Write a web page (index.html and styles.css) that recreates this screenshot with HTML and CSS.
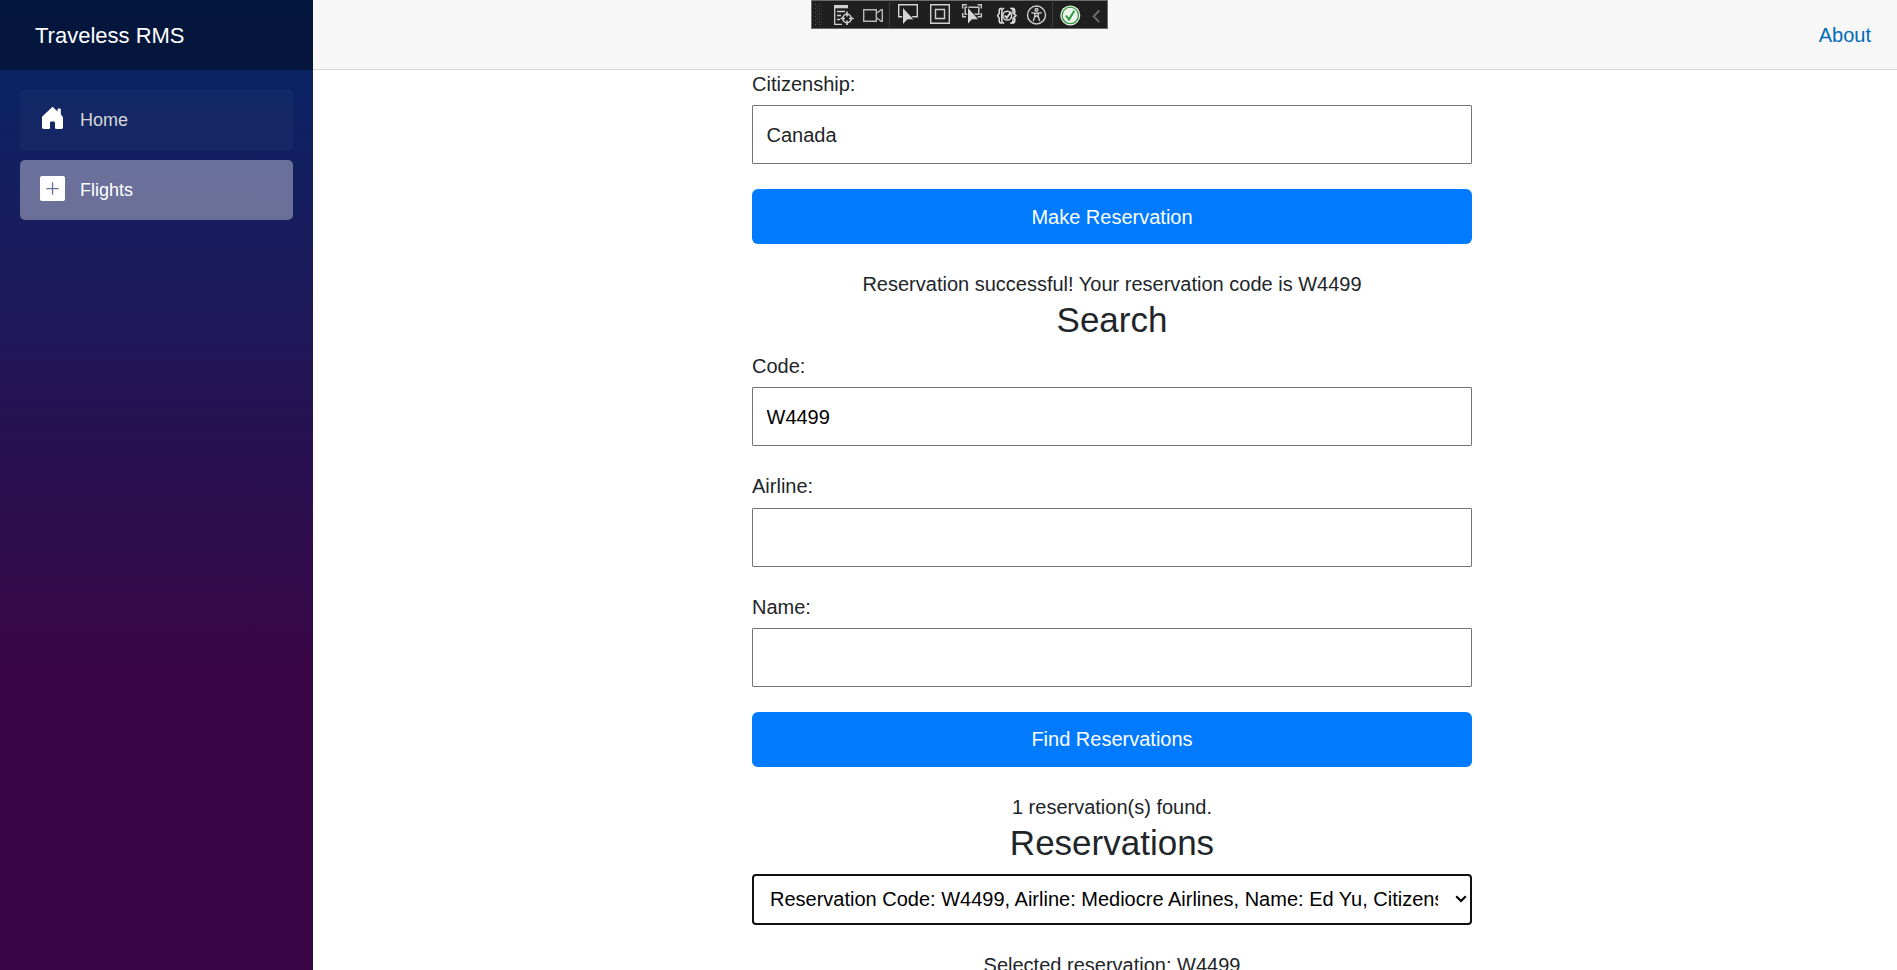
FILE: index.html
```html
<!DOCTYPE html>
<html lang="en">
<head>
<meta charset="utf-8">
<title>Traveless RMS</title>
<link rel="stylesheet" href="styles.css">
</head>
<body>
<div class="page">
  <aside class="sidebar">
    <div class="brand-row"><a class="brand">Traveless RMS</a></div>
    <nav class="nav">
      <a class="nav-link">
        <svg class="nav-icon" viewBox="0 0 25 25"><path fill="#fff" d="M12.5 .7 L17.6 5.4 V3.1 Q17.6 2.4 18.4 2.4 H20 Q20.8 2.4 20.8 3.2 V8.3 L23 11.2 V21.6 Q23 23 21.6 23 H16.2 Q15 23 15 21.8 V16.8 Q15 15.4 13.7 15.4 H11.4 Q10 15.4 10 16.8 V21.8 Q10 23 8.8 23 H3.6 Q2 23 2 21.6 V10.8 Z"/></svg>
        <span>Home</span>
      </a>
      <a class="nav-link active">
        <svg class="nav-icon" viewBox="0 0 25 25"><path fill="#fff" fill-rule="evenodd" d="M2 0H23Q25 0 25 2V23Q25 25 23 25H2Q0 25 0 23V2Q0 0 2 0ZM11.9 6.3V11.9H6.3V13.2H11.9V18.8H13.2V13.2H18.8V11.9H13.2V6.3Z"/></svg>
        <span>Flights</span>
      </a>
    </nav>
  </aside>
  <main class="main">
    <header class="top-row"><a class="about">About</a></header>
    <article class="content">
      <label class="label" for="citizenship">Citizenship:</label>
      <input class="input input-muted" id="citizenship" value="Canada">
      <button class="button">Make Reservation</button>
      <p class="message">Reservation successful! Your reservation code is W4499</p>
      <h3 class="heading">Search</h3>
      <label class="label" for="code">Code:</label>
      <input class="input" id="code" value="W4499">
      <label class="label" for="airline">Airline:</label>
      <input class="input" id="airline">
      <label class="label" for="name">Name:</label>
      <input class="input" id="name">
      <button class="button">Find Reservations</button>
      <p class="message">1 reservation(s) found.</p>
      <h3 class="heading">Reservations</h3>
      <div class="select-box">
        <select class="select">
          <option>Reservation Code: W4499, Airline: Mediocre Airlines, Name: Ed Yu, Citizenship: Canada</option>
        </select>
        <svg class="chevron" viewBox="0 0 12 8"><path d="M1.2 1.2 L6 6 L10.8 1.2" fill="none" stroke="#000" stroke-width="2.1"/></svg>
      </div>
      <p class="message">Selected reservation: W4499</p>
    </article>
  </main>
</div>
<div class="debug-bar">
  <svg class="grip" viewBox="0 0 8 23"><g fill="#505050"><path d="M0 1h1v1h-1zM4 1h1v1h-1zM2 3h1v1h-1zM6 3h1v1h-1zM0 5h1v1h-1zM4 5h1v1h-1zM2 7h1v1h-1zM6 7h1v1h-1zM0 9h1v1h-1zM4 9h1v1h-1zM2 11h1v1h-1zM6 11h1v1h-1zM0 13h1v1h-1zM4 13h1v1h-1zM2 15h1v1h-1zM6 15h1v1h-1zM0 17h1v1h-1zM4 17h1v1h-1zM2 19h1v1h-1zM6 19h1v1h-1zM0 21h1v1h-1zM4 21h1v1h-1z"/></g></svg>
  <svg class="tool" viewBox="0 0 22 22"><g fill="none" stroke="#d0d0d0" stroke-width="1.3"><path d="M.7 4V20.3H8"/><path d="M3 7.5H11M3 11.5H7M3 15.5H6"/><circle cx="13" cy="14.5" r="4.2" stroke-width="1.6"/><path d="M13 7.5V12.5M13 16.5V21M6.5 14.5H11M15 14.5H19.8" stroke-width="1.6"/></g><path fill="#d0d0d0" d="M0 1H14V4.3H0Z"/></svg>
  <svg class="tool" viewBox="0 0 22 22"><path fill="none" stroke="#b8b8b8" stroke-width="1.4" d="M.7 5.7H13.3V17.3H.7ZM13.5 9.3L18.2 5.6H19.3V17.4H18.2L13.5 13.7"/></svg>
  <i class="divider"></i>
  <svg class="tool" viewBox="0 0 22 22"><path fill="none" stroke="#d4d4d4" stroke-width="1.4" d="M.7.7H19.3V12.7H.7Z"/><path fill="#d4d4d4" stroke="#1f1f1f" stroke-width="1.6" paint-order="stroke" d="M5 4V20L9.2 15.5H15.5Z"/><path fill="#1f1f1f" d="M9.5 15.6H15.5V17H9.5Z"/></svg>
  <svg class="tool" viewBox="0 0 22 22"><path fill="none" stroke="#d0d0d0" stroke-width="1.4" d="M.7.7H19.3V19.3H.7ZM5.5 5.5H14.5V14.5H5.5Z"/></svg>
  <svg class="tool" viewBox="0 0 22 22"><path fill="none" stroke="#c4c4c4" stroke-width="1.5" d="M1.7 4.5V.8H6M16.5.8H20.3V4.5M1.7 9V12.8H5M20.3 9V12.8H16.5M4.2 3.2H17.8V10.2H4.2Z"/><path fill="#d4d4d4" stroke="#1f1f1f" stroke-width="1.6" paint-order="stroke" d="M7 4V19.5L11 15.3H17Z"/></svg>
  <svg class="tool" viewBox="0 0 22 22"><g fill="none" stroke="#dedede" stroke-width="1.5"><path d="M5.8 4.2Q3.2 4.2 3.2 6.5V9.2L1.6 11.7L3.2 14.2V17Q3.2 19.2 5.8 19.2M8.2 4.2Q5.8 4.6 5.8 7V16.4Q5.8 18.8 8.2 19.2M14.2 4.2Q17 4.2 17 6.5V9.2L20 11.7L17 14.2V17Q17 19.2 14.2 19.2M16.2 4.2Q18.8 4.5 18.8 7V9.5M18.8 14V16.5Q18.8 19 16.2 19.2"/><circle cx="11.2" cy="11.7" r="4.4"/><path d="M8.7 11.5L10.7 13.8L15.2 7.8" stroke-width="1.9"/></g></svg>
  <svg class="tool" viewBox="0 0 22 22"><g fill="none" stroke="#cfcfcf" stroke-width="1.4"><circle cx="10.5" cy="11" r="9"/><circle cx="10.5" cy="5.9" r="1.4"/><path d="M5.3 8.6L8.8 9.3V12.5L7.3 17M15.7 8.6L12.2 9.3V12.5L13.7 17M8.8 9.3H12.2M8.8 13L10.5 11.8L12.2 13"/></g></svg>
  <i class="divider"></i>
  <svg class="tool" viewBox="0 0 22 22"><circle cx="10.3" cy="11.4" r="10" fill="#eef3ee"/><circle cx="10.3" cy="11.4" r="8.2" fill="none" stroke="#319a38" stroke-width="1.3"/><path d="M6 11.7L9 15.5L14.3 6.8" fill="none" stroke="#319a38" stroke-width="2"/></svg>
  <svg class="tool" viewBox="0 0 22 22"><path d="M7.3 6.5L1.6 12.3L7.3 18.2" fill="none" stroke="#707070" stroke-width="1.8"/></svg>
</div>
</body>
</html>
```
FILE: styles.css
```css
* { box-sizing: border-box; }
body {
  margin: 0;
  height: 970px;
  overflow: hidden;
  background: #fff;
  color: #212529;
  font: 20px/30px "Liberation Sans", Arial, sans-serif;
}
.page { display: flex; height: 970px; }
.sidebar {
  flex: 0 0 313px;
  background: linear-gradient(180deg, rgb(5, 39, 103) 0%, #3a0647 70%);
}
.brand-row {
  display: flex;
  align-items: center;
  height: 70px;
  padding: 2px 0 0 35px;
  background: rgba(0, 0, 0, .4);
}
.brand { color: #fff; font-size: 22px; }
.nav {
  display: flex;
  flex-direction: column;
  gap: 10px;
  padding: 20px;
}
.nav-link {
  display: flex;
  align-items: center;
  gap: 15px;
  height: 60px;
  padding-left: 20px;
  border-radius: 5px;
  background: rgba(255, 255, 255, .03);
  color: #d7d7d7;
  font-size: 18px;
}
.nav-link.active { background: rgba(255, 255, 255, .37); color: #fff; }
.nav-icon { width: 25px; height: 25px; margin-top: -3px; }
.main { flex: 1; min-width: 0; }
.top-row {
  position: relative;
  z-index: 1;
  display: flex;
  align-items: center;
  justify-content: flex-end;
  height: 70px;
  padding-right: 26px;
  background: #f7f7f7;
  border-bottom: 1px solid #d6d5d5;
}
.about { color: #006bb7; }
.content {
  display: flex;
  flex-direction: column;
  width: 720px;
  margin: -1.25px 0 0 439px;
}
.label { height: 30px; margin-bottom: 6.25px; }
.input {
  flex: none;
  height: 59px;
  margin: 0 0 25px;
  padding: 1px 13.5px 0;
  border: 1px solid #767676;
  border-radius: 1px;
  background: #fff;
  color: #000;
  font: inherit;
}
.input-muted { color: #212529; }
.button {
  flex: none;
  height: 55px;
  margin: 0 0 25px;
  padding: 0;
  border: 0;
  border-radius: 6px;
  background: #007bff;
  color: #fff;
  font: inherit;
}
.message { height: 30px; margin: 0; text-align: center; }
.heading {
  margin: 0 0 10px;
  font-size: 35px;
  font-weight: 400;
  line-height: 42px;
  text-align: center;
}
.select-box {
  display: flex;
  align-items: center;
  height: 51px;
  margin-bottom: 25px;
  padding-right: 3px;
  border: 2px solid #101010;
  border-radius: 4px;
}
.select {
  flex: 1;
  min-width: 0;
  height: 47px;
  margin: 0 17px 0 16px;
  padding: 0;
  appearance: none;
  border: 0;
  background: none;
  color: #000;
  font: inherit;
}
.chevron { width: 12px; height: 8px; }
.debug-bar {
  position: absolute;
  z-index: 2;
  top: 0;
  left: 811px;
  display: grid;
  grid-template-columns: 19px 29px 26px 9px 32px 31px 35px 30px 26px 8px 32px 16px;
  align-items: center;
  width: 297px;
  height: 29px;
  padding-left: 3px;
  border: 1px solid #6b6b6b;
  background: #1f1f1f;
}
.grip { width: 8px; height: 23px; }
.tool { width: 22px; height: 22px; }
.divider { width: 1px; height: 25px; background: #3d3d3d; }
```
